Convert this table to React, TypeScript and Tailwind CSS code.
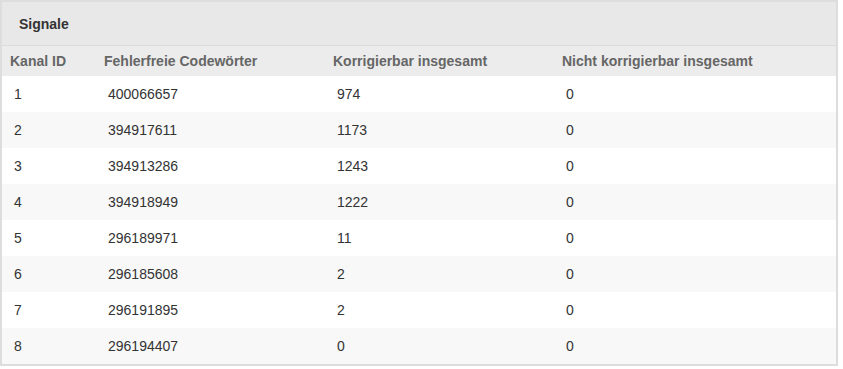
const rows: [string, string, string, string][] = [
  ["1", "400066657", "974", "0"],
  ["2", "394917611", "1173", "0"],
  ["3", "394913286", "1243", "0"],
  ["4", "394918949", "1222", "0"],
  ["5", "296189971", "11", "0"],
  ["6", "296185608", "2", "0"],
  ["7", "296191895", "2", "0"],
  ["8", "296194407", "0", "0"],
];

const cols = "grid grid-cols-[94px_229px_229px_1fr]";

export default function App() {
  return (
    <div className="w-[843px] h-[369px] bg-white font-['Liberation_Sans',Arial,sans-serif] text-[14px]">
      <div className="w-[838px] border-2 border-[#dddddd]">
        <div className="h-[44px] bg-[#e8e8e8] border-b border-[#dcdcdc] flex items-center pl-[17px] pt-[1px] font-bold text-[#333333]">
          Signale
        </div>
        <div className={`${cols} h-[30px] items-center pt-[1px] bg-[#ececec] font-bold text-[#666666]`}>
          <div className="pl-[8px]">Kanal ID</div>
          <div className="pl-[8px]">Fehlerfreie Codewörter</div>
          <div className="pl-[8px]">Korrigierbar insgesamt</div>
          <div className="pl-[8px]">Nicht korrigierbar insgesamt</div>
        </div>
        {rows.map((r, i) => (
          <div
            key={r[0]}
            className={`${cols} h-[36px] items-center pt-[1px] text-[#333333] ${i % 2 === 1 ? "bg-[#f8f8f8]" : "bg-white"}`}
          >
            {r.map((c, j) => (
              <div key={j} className="pl-[12px]">
                {c}
              </div>
            ))}
          </div>
        ))}
      </div>
    </div>
  );
}
